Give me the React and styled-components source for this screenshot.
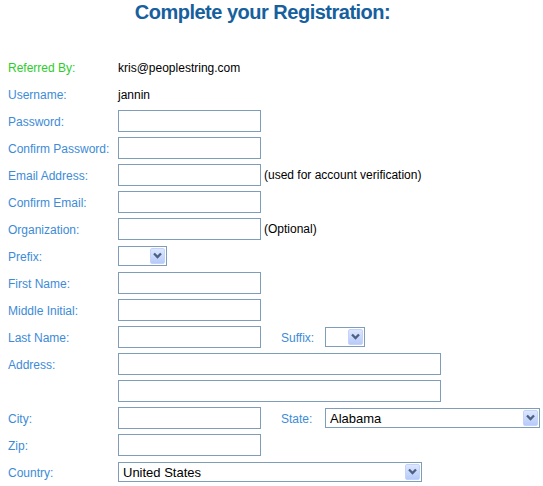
import React from 'react'
import styled, { createGlobalStyle } from 'styled-components'

const GlobalStyle = createGlobalStyle`
  body {
    margin: 0;
    background: #fff;
    font-family: "Liberation Sans", Arial, sans-serif;
  }
`

const Page = styled.div`
  width: 543px;
  padding-left: 8px;
  box-sizing: border-box;
`

const Title = styled.h1`
  margin: 0;
  width: 509px;
  height: 53px;
  padding-top: 1px;
  box-sizing: border-box;
  text-align: center;
  font-size: 20px;
  letter-spacing: -0.5px;
  line-height: 22px;
  font-weight: bold;
  color: #16609e;
`

const Form = styled.div`
  display: flex;
  flex-direction: column;
`

const Row = styled.div`
  display: flex;
  align-items: center;
  height: 27px;
`

const Label = styled.div`
  width: 110px;
  flex-shrink: 0;
  padding-top: 2px;
  font-size: 12px;
  color: ${p => (p.$green ? '#2ccc2c' : '#3d8bd7')};
`

const SideLabel = styled(Label)`
  width: 44px;
  margin-left: 20px;
`

const Value = styled.span`
  padding-top: 2px;
  font-size: 12px;
  color: #000;
`

const Note = styled.span`
  padding-top: 1px;
  font-size: 12px;
  color: #000;
  margin-left: 3px;
`

const TextInput = styled.input`
  box-sizing: border-box;
  width: ${p => (p.$wide ? '323px' : '143px')};
  height: 22px;
  margin: 0;
  padding: 1px 3px;
  border: 1px solid #7f9db9;
  background: #fff;
  font: 12px "Liberation Sans", Arial, sans-serif;
  outline: none;
`

const SelectBox = styled.div`
  box-sizing: border-box;
  width: ${p => p.$w}px;
  height: 20px;
  padding: 1px;
  border: 1px solid #7f9db9;
  background: #fff;
  display: flex;
  align-items: stretch;
`

const SelectText = styled.span`
  flex: 1;
  padding-left: 3px;
  font-size: 13px;
  line-height: 17px;
  color: #000;
  white-space: nowrap;
  overflow: hidden;
`

const ArrowButton = styled.span`
  width: 15px;
  flex-shrink: 0;
  box-sizing: border-box;
  border: 1px solid #c3d3fd;
  border-radius: 2px;
  background: linear-gradient(#dde7fe, #b7cbf8);
  display: flex;
  align-items: center;
  justify-content: center;
`

function Select({ width, value }) {
  return (
    <SelectBox $w={width}>
      <SelectText>{value}</SelectText>
      <ArrowButton>
        <svg width="9" height="7" viewBox="0 0 9 7">
          <polyline points="1,1.5 4.5,5 8,1.5" fill="none" stroke="#4d6185" strokeWidth="2.3" />
        </svg>
      </ArrowButton>
    </SelectBox>
  )
}

export default function App() {
  return (
    <Page>
      <GlobalStyle />
      <Title>Complete your Registration:</Title>
      <Form>
        <Row>
          <Label $green>Referred By:</Label>
          <Value>kris@peoplestring.com</Value>
        </Row>
        <Row>
          <Label>Username:</Label>
          <Value>jannin</Value>
        </Row>
        <Row>
          <Label>Password:</Label>
          <TextInput type="password" />
        </Row>
        <Row>
          <Label>Confirm Password:</Label>
          <TextInput type="password" />
        </Row>
        <Row>
          <Label>Email Address:</Label>
          <TextInput />
          <Note>(used for account verification)</Note>
        </Row>
        <Row>
          <Label>Confirm Email:</Label>
          <TextInput />
        </Row>
        <Row>
          <Label>Organization:</Label>
          <TextInput />
          <Note>(Optional)</Note>
        </Row>
        <Row>
          <Label>Prefix:</Label>
          <Select width={49} value="" />
        </Row>
        <Row>
          <Label>First Name:</Label>
          <TextInput />
        </Row>
        <Row>
          <Label>Middle Initial:</Label>
          <TextInput />
        </Row>
        <Row>
          <Label>Last Name:</Label>
          <TextInput />
          <SideLabel>Suffix:</SideLabel>
          <Select width={40} value="" />
        </Row>
        <Row>
          <Label>Address:</Label>
          <TextInput $wide />
        </Row>
        <Row>
          <Label />
          <TextInput $wide />
        </Row>
        <Row>
          <Label>City:</Label>
          <TextInput />
          <SideLabel>State:</SideLabel>
          <Select width={215} value="Alabama" />
        </Row>
        <Row>
          <Label>Zip:</Label>
          <TextInput />
        </Row>
        <Row>
          <Label>Country:</Label>
          <Select width={304} value="United States" />
        </Row>
      </Form>
    </Page>
  )
}
